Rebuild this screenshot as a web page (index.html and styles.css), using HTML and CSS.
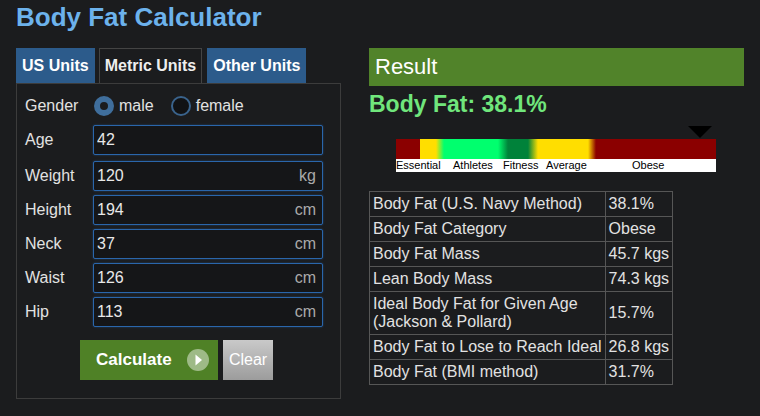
FILE: index.html
```html
<!DOCTYPE html>
<html lang="en">
  <head>
    <meta charset="UTF-8" />
    <title>Body Fat Calculator</title>
    <link rel="stylesheet" href="styles.css">
  </head>
  <body>
    <div id="main">
      <h1>Body Fat Calculator</h1>
      <div class="cols">
        <div class="left">
          <div class="tabs">
            <div class="tab">US Units</div>
            <div class="tab active">Metric Units</div>
            <div class="tab">Other Units</div>
          </div>
          <div class="panel">
            <div class="row">
              <label>Gender</label>
              <div class="gender">
                <span class="radio checked"></span><span class="opt">male</span>
                <span class="radio"></span><span class="opt">female</span>
              </div>
            </div>
            <div class="row first">
              <label>Age</label>
              <div class="field"><input value="42"></div>
            </div>
            <div class="row">
              <label>Weight</label>
              <div class="field"><input value="120"><span class="unit">kg</span></div>
            </div>
            <div class="row">
              <label>Height</label>
              <div class="field"><input value="194"><span class="unit">cm</span></div>
            </div>
            <div class="row">
              <label>Neck</label>
              <div class="field"><input value="37"><span class="unit">cm</span></div>
            </div>
            <div class="row">
              <label>Waist</label>
              <div class="field"><input value="126"><span class="unit">cm</span></div>
            </div>
            <div class="row">
              <label>Hip</label>
              <div class="field"><input value="113"><span class="unit">cm</span></div>
            </div>
            <div class="buttons">
              <button class="calc">Calculate
                <svg width="22" height="22" viewBox="0 0 22 22">
                  <circle cx="11" cy="11" r="11" fill="rgba(255,255,255,0.45)" />
                  <path d="M8.5 5.5 L15 11 L8.5 16.5 Z" fill="#fff" />
                </svg>
              </button>
              <button class="clear">Clear</button>
            </div>
          </div>
        </div>

        <div class="right">
          <div class="result-head">Result</div>
          <div class="big">Body Fat: 38.1%</div>
          <div class="scale">
            <div class="marker"></div>
            <div class="bar"></div>
            <div class="names">
              <span style="left:0px">Essential</span>
              <span style="left:57px">Athletes</span>
              <span style="left:107px">Fitness</span>
              <span style="left:150px">Average</span>
              <span style="left:236px">Obese</span>
            </div>
          </div>
          <table>
            <tr><td>Body Fat (U.S. Navy Method)</td><td>38.1%</td></tr>
            <tr><td>Body Fat Category</td><td>Obese</td></tr>
            <tr><td>Body Fat Mass</td><td>45.7 kgs</td></tr>
            <tr><td>Lean Body Mass</td><td>74.3 kgs</td></tr>
            <tr><td>Ideal Body Fat for Given Age<br>(Jackson &amp; Pollard)</td><td>15.7%</td></tr>
            <tr><td>Body Fat to Lose to Reach Ideal</td><td>26.8 kgs</td></tr>
            <tr><td>Body Fat (BMI method)</td><td>31.7%</td></tr>
          </table>
        </div>
      </div>
    </div>
  </body>
</html>
```

FILE: styles.css
```css
body {
  font-family: "Liberation Sans", Arial, sans-serif;
  margin: 0;
  padding: 0;
  background-color: #1b1c1e;
  color: #e2e2e2;
  font-size: 16px;
}

#main {
  padding: 0 16px;
}

h1 {
  margin: 0;
  padding-top: 2px;
  height: 46px;
  font-size: 26px;
  line-height: 30px;
  color: #6cb2ec;
}

.cols {
  display: flex;
  gap: 28px;
}

.left {
  width: 325px;
}

/* tabs */
.tabs {
  display: flex;
  gap: 4px;
  height: 35px;
}

.tab {
  padding: 0 6px;
  line-height: 35px;
  font-weight: bold;
  color: #fff;
  background-color: #2c5b8b;
}

.tab.active {
  background-color: #1b1c1e;
  color: #eee;
  border: 1px solid #444;
  border-bottom: none;
  line-height: 34px;
  padding: 0 5px;
  margin-right: 1px;
}

.panel {
  border: 1px solid #3c3c3c;
  padding: 7px 17px 18px 8px;
}

.row {
  display: flex;
  align-items: center;
  height: 30px;
  margin-bottom: 4px;
}

.row.first {
  margin-bottom: 6px;
}

.row label {
  flex: none;
  width: 68px;
  color: #e2e2e2;
}

.gender {
  display: flex;
  align-items: center;
  padding-left: 1px;
}

.radio {
  width: 20px;
  height: 20px;
  box-sizing: border-box;
  border-radius: 50%;
  border: 2px solid #3a638c;
  background-color: #111214;
}

.radio.checked {
  border: 6px solid #3f6e9c;
  background-color: #1b1c1e;
}

.opt {
  margin: 0 17px 0 5px;
}

.field {
  flex: 1;
  min-width: 0;
  display: flex;
  align-items: center;
  height: 30px;
  box-sizing: border-box;
  border: 1px solid #2a66ab;
  border-radius: 2px;
  background-color: #151618;
  box-shadow: 0 0 2px rgba(42, 102, 171, 0.6);
}

.field input {
  flex: 1;
  width: 0;
  min-width: 0;
  background: transparent;
  border: none;
  outline: none;
  color: #e8e8e8;
  font-family: inherit;
  font-size: 16px;
  padding: 0 3px;
}

.unit {
  color: #aaa;
  padding-right: 6px;
}

.buttons {
  display: flex;
  gap: 5px;
  margin: 13px 0 0 55px;
}

button {
  height: 40px;
  border: none;
  font-family: inherit;
  font-size: 16px;
  color: #fff;
  cursor: pointer;
}

.calc {
  width: 138px;
  background-color: #4f8126;
  font-weight: bold;
  font-size: 17px;
  display: flex;
  align-items: center;
  padding: 0 9px 0 16px;
  gap: 15px;
}

.clear {
  width: 50px;
  padding: 0;
  background: linear-gradient(#c9c9c9, #9c9c9c);
}

/* result side */
.right {
  width: 375px;
}

.result-head {
  height: 38px;
  line-height: 38px;
  background-color: #51832a;
  color: #fff;
  font-size: 22px;
  padding-left: 6px;
}

.big {
  font-size: 23px;
  font-weight: bold;
  color: #70e67c;
  line-height: 26px;
  margin-top: 5px;
}

.scale {
  position: relative;
  width: 320px;
  margin: 9px 0 0 27px;
  padding-top: 13px;
}

.marker {
  position: absolute;
  top: 0;
  left: 292px;
  width: 0;
  height: 0;
  border-left: 12px solid transparent;
  border-right: 12px solid transparent;
  border-top: 12px solid #000;
}

.bar {
  height: 20px;
  background: linear-gradient(to right,
    #8b0000 0px, #8b0000 24px,
    #ffde00 24px, #ffde00 40px,
    #00ff6e 48px, #00ff6e 102px,
    #00823a 112px, #00823a 132px,
    #ffde00 142px, #ffde00 192px,
    #8b0000 200px, #8b0000 320px);
}

.names {
  position: relative;
  height: 13px;
  background-color: #fff;
}

.names span {
  position: absolute;
  top: 0;
  font-size: 11px;
  line-height: 13px;
  color: #000;
}

table {
  margin-top: 19px;
  border-collapse: collapse;
}

td {
  border: 1px solid #565656;
  padding: 3px 3px;
  line-height: 18px;
  color: #e2e2e2;
  white-space: nowrap;
}
```
